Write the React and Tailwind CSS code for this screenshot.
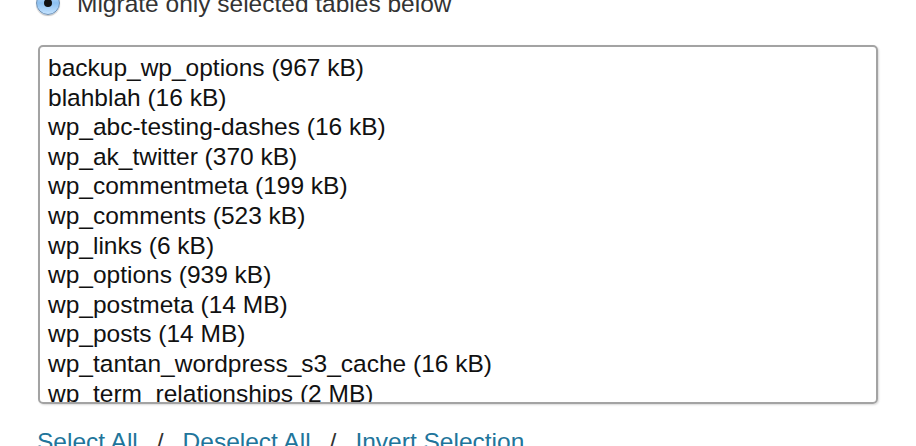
const tables = [
  "backup_wp_options (967 kB)",
  "blahblah (16 kB)",
  "wp_abc-testing-dashes (16 kB)",
  "wp_ak_twitter (370 kB)",
  "wp_commentmeta (199 kB)",
  "wp_comments (523 kB)",
  "wp_links (6 kB)",
  "wp_options (939 kB)",
  "wp_postmeta (14 MB)",
  "wp_posts (14 MB)",
  "wp_tantan_wordpress_s3_cache (16 kB)",
  "wp_term_relationships (2 MB)",
  "wp_term_taxonomy (16 kB)",
];

export default function App() {
  return (
    <div
      className="w-[916px] h-[446px] overflow-hidden bg-white"
      style={{ fontFamily: '"Liberation Sans", Arial, sans-serif' }}
    >
      {/* radio option, cut off at the top */}
      <div className="-mt-[13px] flex items-center h-[32px] pl-[36px] gap-[17px]">
        <span className="w-[24px] h-[24px] rounded-full border border-[#6d8fb3] bg-gradient-to-b from-[#cfe6fb] via-[#8cc0f0] to-[#c4e3ff] flex items-center justify-center shadow-[0_1px_1px_rgba(0,0,0,0.25)]">
          <span className="w-[8px] h-[8px] rounded-full bg-[#111]" />
        </span>
        <span className="mt-[2px] text-[24.5px] leading-[28px] text-[#333]">Migrate only selected tables below</span>
      </div>

      {/* table multi-select */}
      <div className="mt-[26px] ml-[38px] w-[840px] h-[359px] border-2 border-[#a3a3a3] rounded-[5px] shadow-[1px_1px_2px_rgba(0,0,0,0.15)] overflow-hidden pl-[8px] pt-[6px]">
        {tables.map((t) => (
          <div key={t} className="text-[24.5px] leading-[29.6px] text-[#111] whitespace-nowrap">
            {t}
          </div>
        ))}
      </div>

      <div className="mt-[24px] ml-[37px] flex gap-[19px] text-[24.5px] leading-[28px] text-[#21759b]">
        <a>Select All</a>
        <span className="text-[#333]">/</span>
        <a>Deselect All</a>
        <span className="text-[#333]">/</span>
        <a>Invert Selection</a>
      </div>
    </div>
  );
}
